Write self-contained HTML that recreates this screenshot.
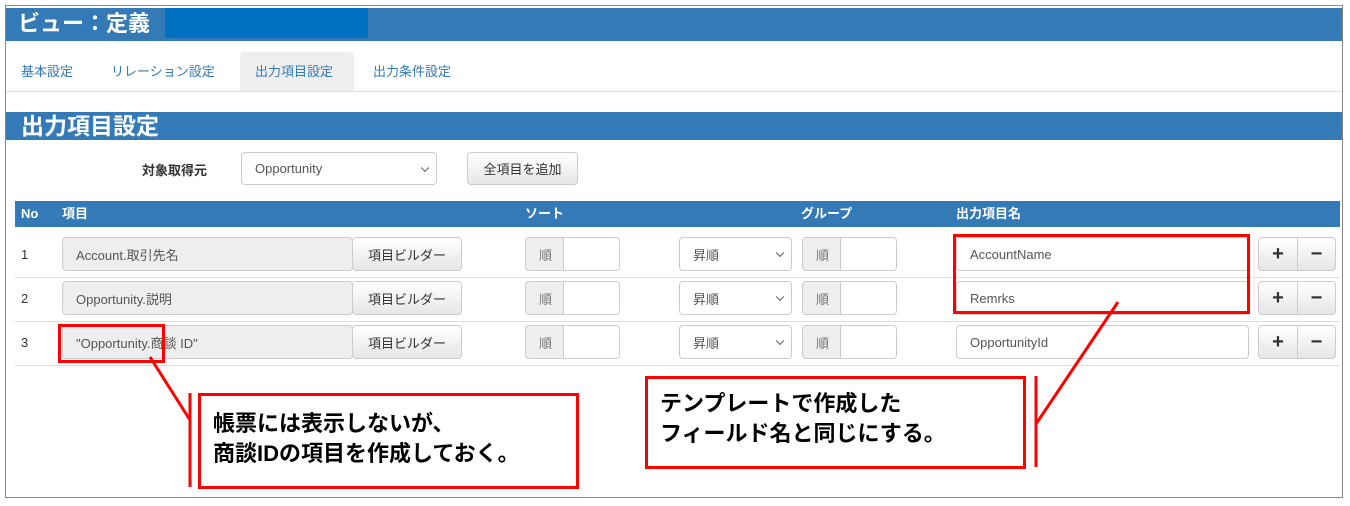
<!DOCTYPE html>
<html><head><meta charset="utf-8"><style>
*{box-sizing:border-box;margin:0;padding:0}
body{width:1350px;height:506px;background:#fff;position:relative;overflow:hidden;font-family:"Liberation Sans","Noto Sans CJK JP",sans-serif;color:#333}
.a{position:absolute}
.frame{left:5px;top:5px;width:1338px;height:493px;border:1px solid #888}
.bar{background:#337ab7;color:#fff}
.tab{top:52px;height:40px;font-size:13px;color:#337ab7;line-height:40px;padding:0 15px}
.inp{border:1px solid #ccc;border-radius:4px;background:#fff;font-size:13px;color:#555;padding-left:13px;display:flex;align-items:center}
.btn{border:1px solid #ccc;border-radius:4px;background:linear-gradient(#fff,#e6e6e6);font-size:13px;color:#333;display:flex;align-items:center;justify-content:center}
.ro{background:#eee}
.w{position:absolute;left:37px;top:0;width:56px;height:32px;background:#fff;border-left:1px solid #ccc;border-radius:0 3px 3px 0}
.line{border-top:1px solid #ddd;left:15px;width:1325px}
.red{border:3px solid #f00}
.call{font-size:22px;font-weight:bold;color:#000;line-height:30px;padding:10px 12px}
.chev{position:absolute;right:8px;top:50%;width:6px;height:6px;border-right:1.5px solid #555;border-bottom:1.5px solid #555;transform:translateY(-70%) rotate(45deg)}
</style></head><body>
<div class="a frame"></div>
<div class="a bar" style="left:6px;top:8px;width:1336px;height:33px;font-size:22px;font-weight:bold;padding-left:12px;line-height:31px">ビュー：定義</div>
<div class="a" style="left:165px;top:8px;width:203px;height:30px;background:#0070c0"></div>
<div class="a tab" style="left:6px">基本設定</div>
<div class="a tab" style="left:96px">リレーション設定</div>
<div class="a tab" style="left:240px;background:#eee;border-radius:4px 4px 0 0;width:114px">出力項目設定</div>
<div class="a tab" style="left:358px">出力条件設定</div>
<div class="a" style="left:6px;top:91px;width:1336px;border-top:1px solid #ddd"></div>
<div class="a bar" style="left:6px;top:112px;width:1336px;height:28px;font-size:23px;font-weight:bold;padding-left:15px;line-height:28px">出力項目設定</div>
<div class="a" style="left:142px;top:160px;font-size:13px;font-weight:bold">対象取得元</div>
<div class="a inp" style="left:241px;top:152px;width:196px;height:33px">Opportunity<span class="chev"></span></div>
<div class="a btn" style="left:467px;top:152px;width:111px;height:33px">全項目を追加</div>
<div class="a bar" style="left:15px;top:201px;width:1325px;height:26px;font-size:13px;font-weight:bold;line-height:26px">
<span class="a" style="left:6px">No</span><span class="a" style="left:47px">項目</span><span class="a" style="left:510px">ソート</span><span class="a" style="left:786px">グループ</span><span class="a" style="left:941px">出力項目名</span></div>

<div class="a" style="left:0;top:233px;width:1350px;height:44px">
<span class="a" style="left:21px;top:14px;font-size:13px">1</span>
<div class="a inp ro" style="left:62px;top:4px;width:291px;height:34px">Account.取引先名</div>
<div class="a btn" style="left:352px;top:4px;width:110px;height:34px">項目ビルダー</div>
<div class="a inp ro" style="left:525px;top:4px;width:95px;height:34px;color:#777">順<span class="w"></span></div>
<div class="a inp" style="left:679px;top:4px;width:113px;height:34px">昇順<span class="chev"></span></div>
<div class="a inp ro" style="left:802px;top:4px;width:95px;height:34px;color:#777">順<span class="w"></span></div>
<div class="a inp" style="left:956px;top:4px;width:293px;height:34px">AccountName</div>
<div class="a btn" style="left:1258px;top:4px;width:40px;height:34px;font-weight:bold;font-size:20px;border-radius:4px 0 0 4px">+</div>
<div class="a btn" style="left:1297px;top:4px;width:39px;height:34px;font-weight:bold;font-size:20px;border-radius:0 4px 4px 0">−</div>
</div>
<div class="a line" style="top:277px"></div>
<div class="a" style="left:0;top:277px;width:1350px;height:44px">
<span class="a" style="left:21px;top:14px;font-size:13px">2</span>
<div class="a inp ro" style="left:62px;top:4px;width:291px;height:34px">Opportunity.説明</div>
<div class="a btn" style="left:352px;top:4px;width:110px;height:34px">項目ビルダー</div>
<div class="a inp ro" style="left:525px;top:4px;width:95px;height:34px;color:#777">順<span class="w"></span></div>
<div class="a inp" style="left:679px;top:4px;width:113px;height:34px">昇順<span class="chev"></span></div>
<div class="a inp ro" style="left:802px;top:4px;width:95px;height:34px;color:#777">順<span class="w"></span></div>
<div class="a inp" style="left:956px;top:4px;width:293px;height:34px">Remrks</div>
<div class="a btn" style="left:1258px;top:4px;width:40px;height:34px;font-weight:bold;font-size:20px;border-radius:4px 0 0 4px">+</div>
<div class="a btn" style="left:1297px;top:4px;width:39px;height:34px;font-weight:bold;font-size:20px;border-radius:0 4px 4px 0">−</div>
</div>
<div class="a line" style="top:321px"></div>
<div class="a" style="left:0;top:321px;width:1350px;height:44px">
<span class="a" style="left:21px;top:14px;font-size:13px">3</span>
<div class="a inp ro" style="left:62px;top:4px;width:291px;height:34px">"Opportunity.商談 ID"</div>
<div class="a btn" style="left:352px;top:4px;width:110px;height:34px">項目ビルダー</div>
<div class="a inp ro" style="left:525px;top:4px;width:95px;height:34px;color:#777">順<span class="w"></span></div>
<div class="a inp" style="left:679px;top:4px;width:113px;height:34px">昇順<span class="chev"></span></div>
<div class="a inp ro" style="left:802px;top:4px;width:95px;height:34px;color:#777">順<span class="w"></span></div>
<div class="a inp" style="left:956px;top:4px;width:293px;height:34px">OpportunityId</div>
<div class="a btn" style="left:1258px;top:4px;width:40px;height:34px;font-weight:bold;font-size:20px;border-radius:4px 0 0 4px">+</div>
<div class="a btn" style="left:1297px;top:4px;width:39px;height:34px;font-weight:bold;font-size:20px;border-radius:0 4px 4px 0">−</div>
</div>
<div class="a line" style="top:365px"></div>

<div class="a red" style="left:953px;top:234px;width:297px;height:80px"></div>
<div class="a red" style="left:58px;top:324px;width:107px;height:39px"></div>
<svg class="a" style="left:0;top:0" width="1350" height="506"><g stroke="#f00" stroke-width="3" fill="none">
<line x1="150" y1="357" x2="190" y2="420"/><line x1="190" y1="393" x2="190" y2="487"/>
<line x1="1118" y1="302" x2="1036" y2="424"/><line x1="1036" y1="376" x2="1036" y2="467"/></g></svg>
<div class="a red call" style="left:198px;top:393px;width:381px;height:96px;padding-top:13px">帳票には表示しないが、<br>商談IDの項目を作成しておく。</div>
<div class="a red call" style="left:645px;top:376px;width:381px;height:93px">テンプレートで作成した<br>フィールド名と同じにする。</div>
</body></html>
